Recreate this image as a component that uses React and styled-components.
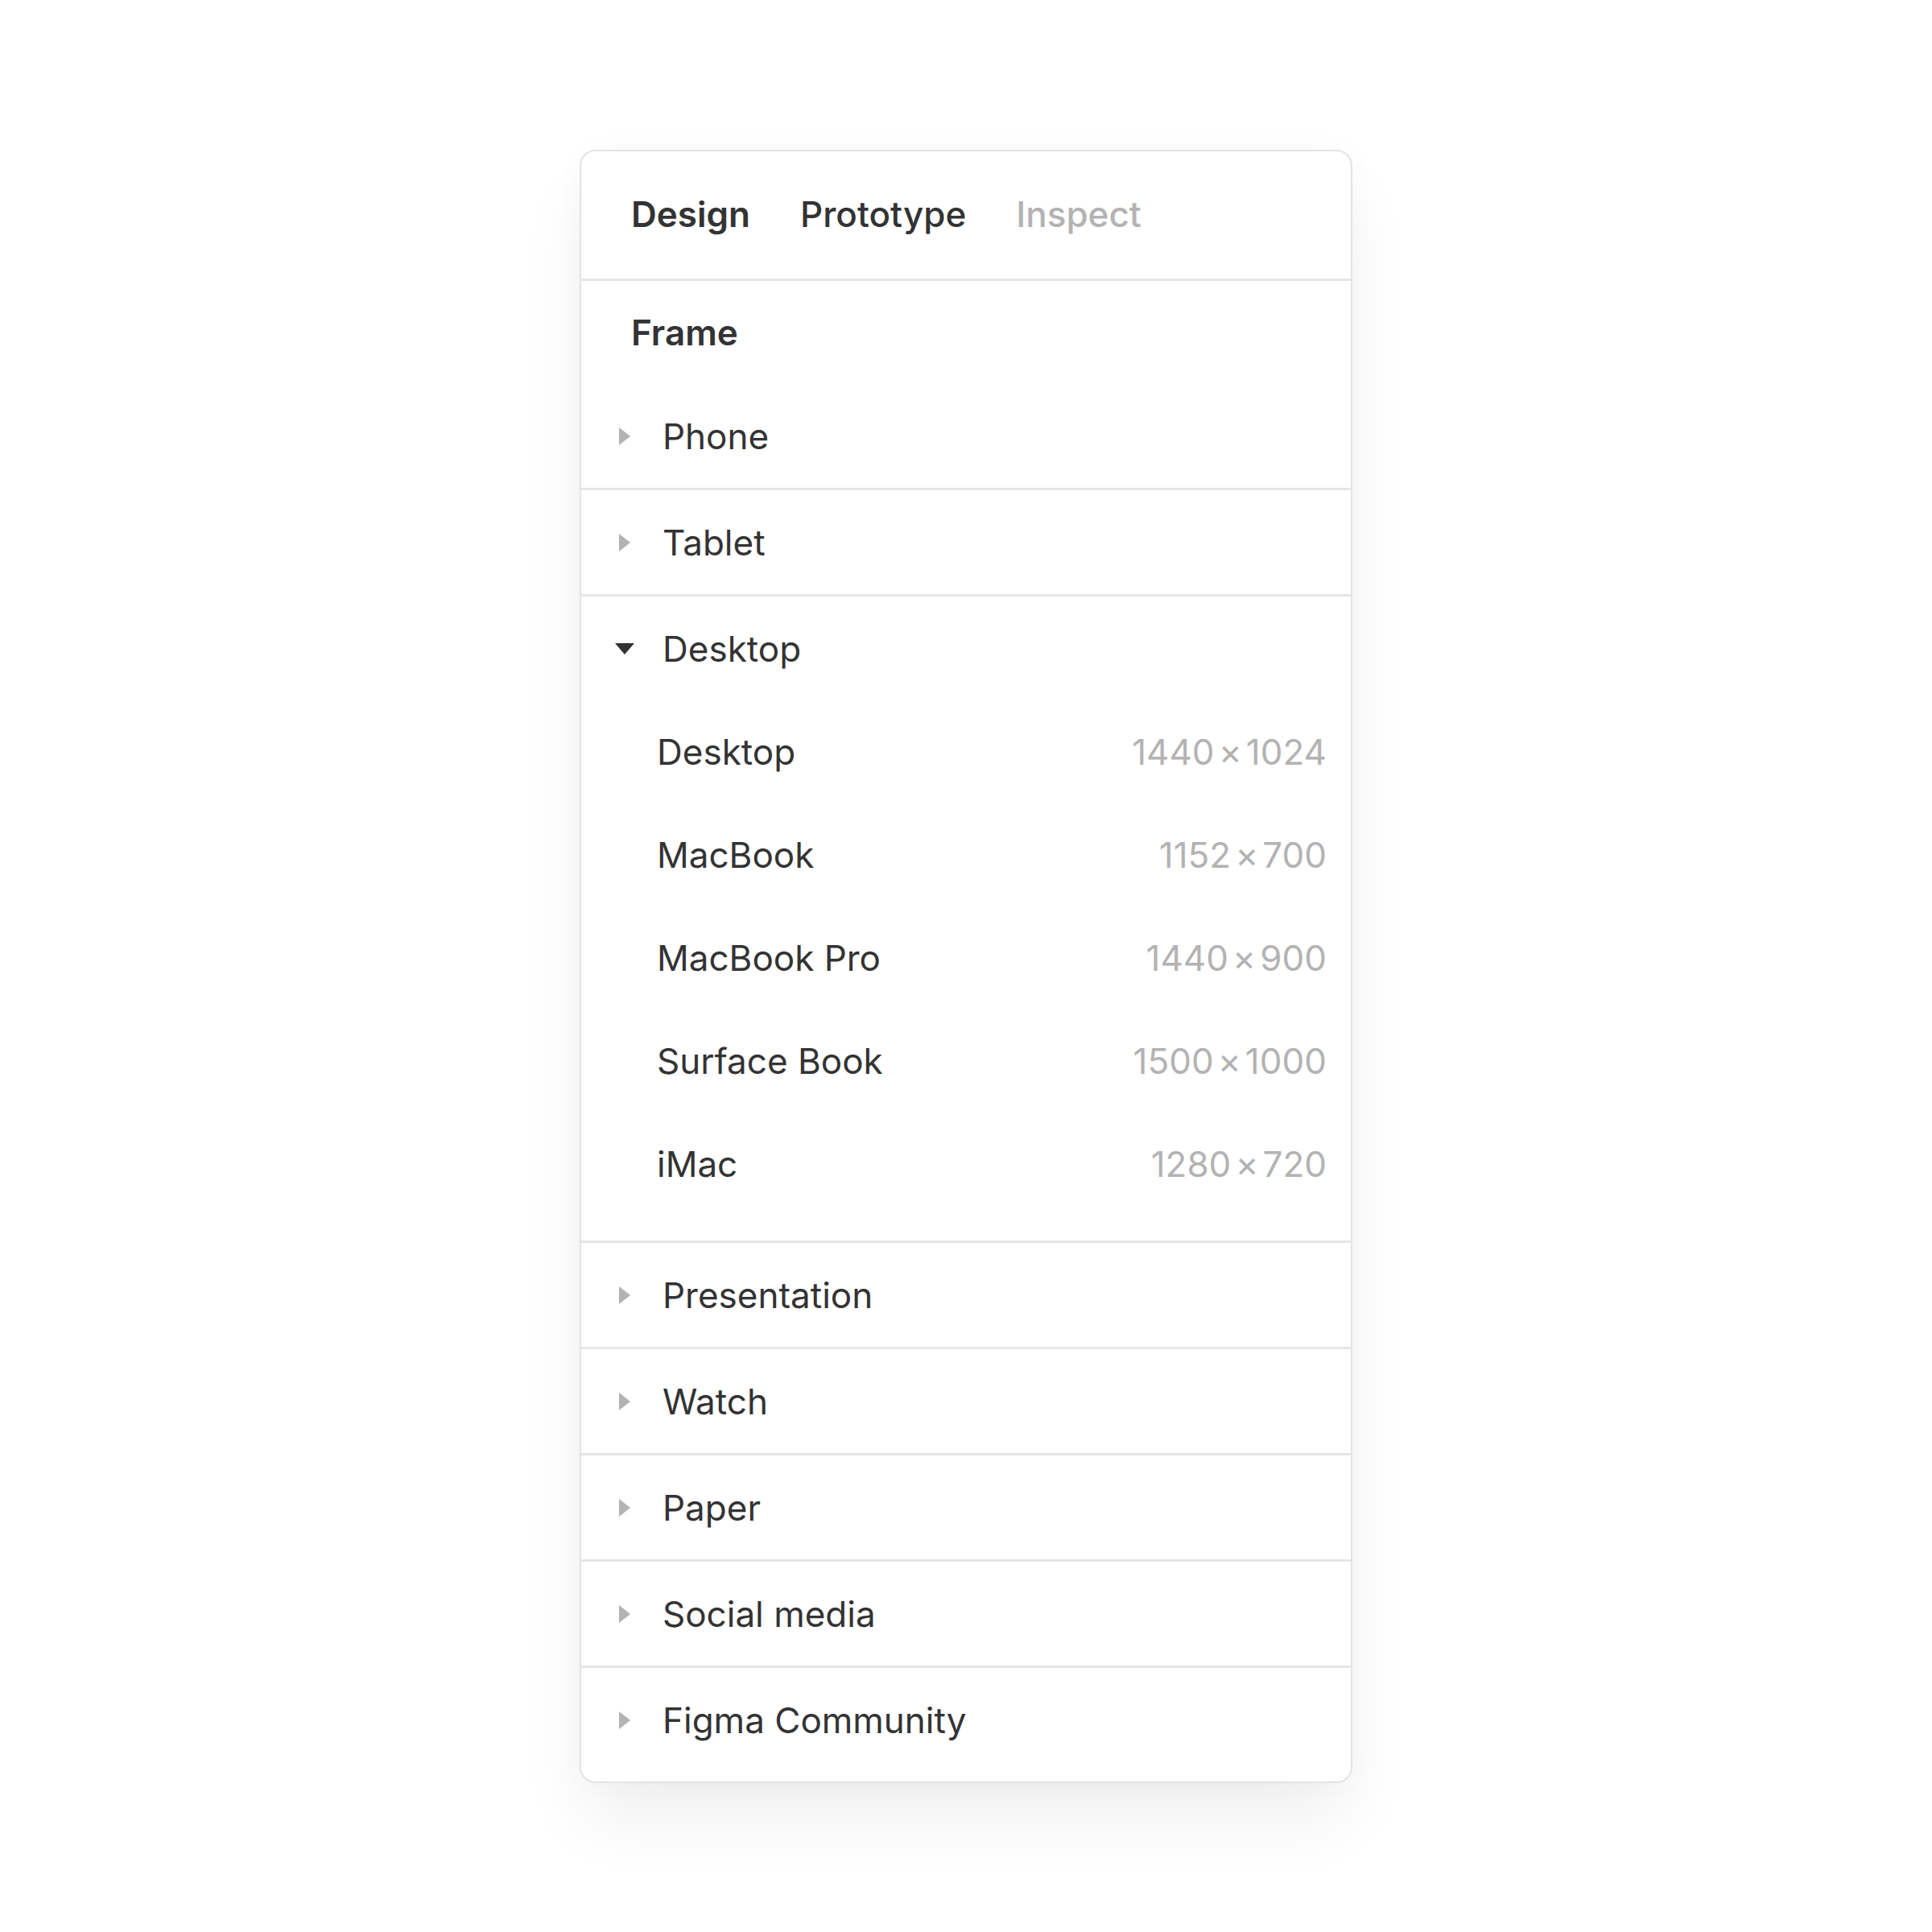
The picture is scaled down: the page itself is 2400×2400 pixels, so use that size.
import styled, { createGlobalStyle } from 'styled-components';

const GlobalStyle = createGlobalStyle`
  html, body {
    margin: 0;
    padding: 0;
    background: #fff;
  }
  body {
    font-family: Inter, "Noto Sans", "Liberation Sans", sans-serif;
    color: #333;
  }
`;

const frameGroups = [
  { id: 'tablet', label: 'Tablet' },
  { id: 'desktop', label: 'Desktop', open: true },
  { id: 'presentation', label: 'Presentation' },
  { id: 'watch', label: 'Watch' },
  { id: 'paper', label: 'Paper' },
  { id: 'social', label: 'Social media' },
  { id: 'community', label: 'Figma Community' },
];

const desktopSizes = [
  { name: 'Desktop', w: 1440, h: 1024 },
  { name: 'MacBook', w: 1152, h: 700 },
  { name: 'MacBook Pro', w: 1440, h: 900 },
  { name: 'Surface Book', w: 1500, h: 1000 },
  { name: 'iMac', w: 1280, h: 720 },
];

const Caret = ({ open }) => (
  <CaretBox>
    {open ? (
      <svg width="26" height="16" viewBox="0 0 26 16">
        <path d="M1 1h24L13 15z" fill="#333" />
      </svg>
    ) : (
      <svg width="16" height="24" viewBox="0 0 16 24">
        <path d="M1 1l14 11L1 23z" fill="#b3b3b3" />
      </svg>
    )}
  </CaretBox>
);

const GroupRow = ({ label, open }) => (
  <Row>
    <Caret open={open} />
    <RowLabel>{label}</RowLabel>
  </Row>
);

const App = () => {
  return (
    <>
      <GlobalStyle />
      <Page>
        <Panel>
          <Tabs>
            <Tab $active>Design</Tab>
            <Tab>Prototype</Tab>
            <Tab $muted>Inspect</Tab>
          </Tabs>

          <Section>
            <SectionTitle>Frame</SectionTitle>
            <GroupRow label="Phone" />
          </Section>

          {frameGroups.map((group) =>
            group.open ? (
              <Section key={group.id} $padBottom>
                <GroupRow label={group.label} open />
                {desktopSizes.map((item) => (
                  <Item key={item.name}>
                    <span>{item.name}</span>
                    <Size>
                      {item.w}
                      <Times>×</Times>
                      {item.h}
                    </Size>
                  </Item>
                ))}
              </Section>
            ) : (
              <Section key={group.id}>
                <GroupRow label={group.label} />
              </Section>
            )
          )}
        </Panel>
      </Page>
    </>
  );
};

const Page = styled.div`
  display: flex;
  justify-content: center;
  padding-top: 186px;
  min-height: 2400px;
  box-sizing: border-box;
`;

const Panel = styled.div`
  width: 960px;
  box-sizing: border-box;
  border: 2px solid #e3e3e3;
  border-radius: 20px;
  background: #fff;
  padding-bottom: 12px;
  align-self: flex-start;
  box-shadow: 0 50px 90px -10px rgba(0, 0, 0, 0.07),
    0 0 40px rgba(0, 0, 0, 0.025);
  overflow: hidden;
`;

const Tabs = styled.div`
  height: 158px;
  display: flex;
  align-items: center;
  gap: 62px;
  padding-left: 62px;
  border-bottom: 3px solid #e6e6e6;
`;

const Tab = styled.div`
  font-size: 44px;
  font-weight: ${(p) => (p.$active ? 600 : 500)};
  color: ${(p) => (p.$muted ? '#b3b3b3' : '#333')};
  margin-top: -2px;
`;

const Section = styled.div`
  border-bottom: 3px solid #e6e6e6;
  padding-bottom: ${(p) => (p.$padBottom ? '31px' : '0')};
  &:last-child {
    border-bottom: none;
  }
`;

const SectionTitle = styled.div`
  height: 128px;
  display: flex;
  align-items: center;
  padding-left: 62px;
  font-size: 44px;
  font-weight: 600;
  color: #333;
`;

const Row = styled.div`
  height: 129px;
  display: flex;
  align-items: center;
  padding-left: 41px;
`;

const CaretBox = styled.div`
  width: 26px;
  height: 26px;
  display: flex;
  align-items: center;
  justify-content: center;
  margin-right: 34px;
`;

const RowLabel = styled.span`
  font-size: 44px;
  color: #333;
`;

const Item = styled.div`
  height: 128px;
  display: flex;
  align-items: center;
  justify-content: space-between;
  padding: 0 30px 0 94px;
  font-size: 44px;
  color: #333;
`;

const Size = styled.span`
  color: #b3b3b3;
`;

const Times = styled.span`
  margin: 0 5px;
`;

export default App;
